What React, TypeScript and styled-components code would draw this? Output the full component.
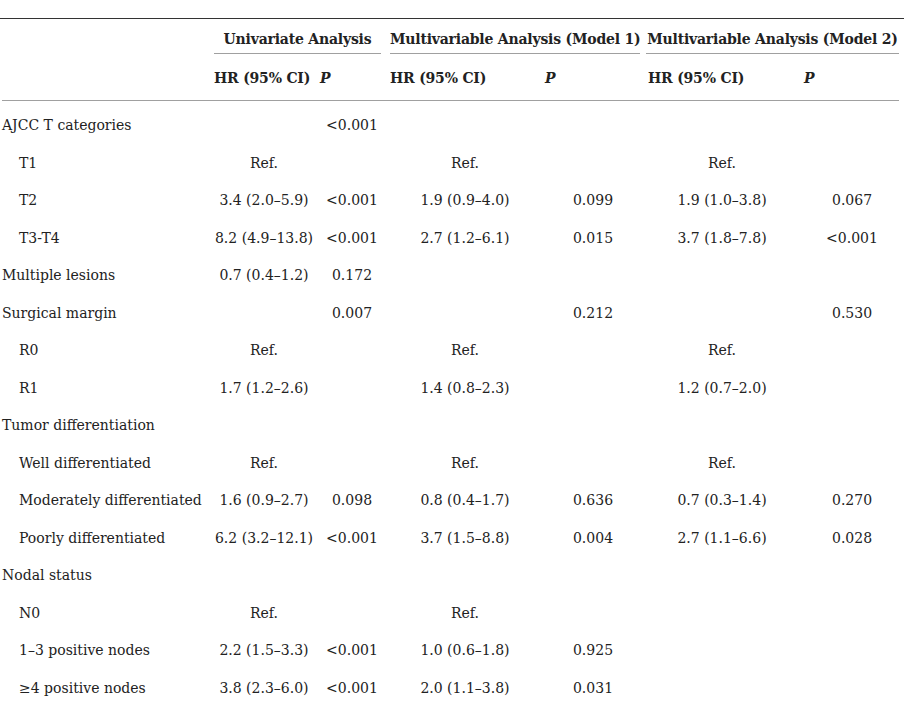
import React from "react";
import styled, { createGlobalStyle } from "styled-components";

const GlobalStyle = createGlobalStyle`
  html, body {
    margin: 0;
    padding: 0;
    background: #ffffff;
  }
  body {
    font-family: "DejaVu Serif", "Liberation Serif", serif;
    color: #222222;
  }
`;

const Table = styled.table`
  margin-top: 18px;
  width: 904px;
  table-layout: fixed;
  border-collapse: collapse;
  border-top: 1px solid #333333;
  font-size: 14px;
`;

const HeadCell = styled.th<{ $pad?: number }>`
  padding: 13.5px 0 12.5px ${(p) => p.$pad ?? 2}px;
  line-height: 20px;
  font-weight: bold;
  letter-spacing: -0.2px;
  text-align: left;
  white-space: nowrap;
`;

const GroupCell = styled.th`
  padding: 9.5px 0 0;
  font-weight: bold;
  letter-spacing: -0.2px;
  white-space: nowrap;
`;

const GroupLabel = styled.div<{ $right?: number }>`
  margin: 0 ${(p) => p.$right ?? 6}px 0 2px;
  padding-bottom: 4.5px;
  line-height: 20px;
  text-align: center;
  border-bottom: 1px solid #a0a0a0;
`;

const RuleCell = styled.td`
  padding: 0 0 6px;
`;

const Rule = styled.div`
  margin: 0 5px 0 2px;
  border-top: 1px solid #a0a0a0;
`;

const Label = styled.td<{ $indent?: boolean }>`
  height: 37.5px;
  padding: 0 0 0 ${(p) => (p.$indent ? 19 : 2)}px;
  line-height: 37.5px;
  white-space: nowrap;
`;

const Value = styled.td`
  padding: 0;
  line-height: 37.5px;
  text-align: center;
  white-space: nowrap;
`;

const PItalic = styled.i`
  font-style: italic;
`;

type Row = {
  label: string;
  indent?: boolean;
  values: string[];
};

const rows: Row[] = [
  { label: "AJCC T categories", values: ["", "<0.001", "", "", "", ""] },
  { label: "T1", indent: true, values: ["Ref.", "", "Ref.", "", "Ref.", ""] },
  { label: "T2", indent: true, values: ["3.4 (2.0–5.9)", "<0.001", "1.9 (0.9–4.0)", "0.099", "1.9 (1.0–3.8)", "0.067"] },
  { label: "T3-T4", indent: true, values: ["8.2 (4.9–13.8)", "<0.001", "2.7 (1.2–6.1)", "0.015", "3.7 (1.8–7.8)", "<0.001"] },
  { label: "Multiple lesions", values: ["0.7 (0.4–1.2)", "0.172", "", "", "", ""] },
  { label: "Surgical margin", values: ["", "0.007", "", "0.212", "", "0.530"] },
  { label: "R0", indent: true, values: ["Ref.", "", "Ref.", "", "Ref.", ""] },
  { label: "R1", indent: true, values: ["1.7 (1.2–2.6)", "", "1.4 (0.8–2.3)", "", "1.2 (0.7–2.0)", ""] },
  { label: "Tumor differentiation", values: ["", "", "", "", "", ""] },
  { label: "Well differentiated", indent: true, values: ["Ref.", "", "Ref.", "", "Ref.", ""] },
  { label: "Moderately differentiated", indent: true, values: ["1.6 (0.9–2.7)", "0.098", "0.8 (0.4–1.7)", "0.636", "0.7 (0.3–1.4)", "0.270"] },
  { label: "Poorly differentiated", indent: true, values: ["6.2 (3.2–12.1)", "<0.001", "3.7 (1.5–8.8)", "0.004", "2.7 (1.1–6.6)", "0.028"] },
  { label: "Nodal status", values: ["", "", "", "", "", ""] },
  { label: "N0", indent: true, values: ["Ref.", "", "Ref.", "", "", ""] },
  { label: "1–3 positive nodes", indent: true, values: ["2.2 (1.5–3.3)", "<0.001", "1.0 (0.6–1.8)", "0.925", "", ""] },
  { label: "≥4 positive nodes", indent: true, values: ["3.8 (2.3–6.0)", "<0.001", "2.0 (1.1–3.8)", "0.031", "", ""] },
];

const colWidths = [212, 104, 72, 154, 102, 156, 104];

export default function App() {
  return (
    <>
      <GlobalStyle />
      <Table>
        <colgroup>
          {colWidths.map((w, i) => (
            <col key={i} style={{ width: w }} />
          ))}
        </colgroup>
        <thead>
          <tr>
            <GroupCell />
            <GroupCell colSpan={2}>
              <GroupLabel $right={7}>Univariate Analysis</GroupLabel>
            </GroupCell>
            <GroupCell colSpan={2}>
              <GroupLabel $right={4}>Multivariable Analysis (Model 1)</GroupLabel>
            </GroupCell>
            <GroupCell colSpan={2}>
              <GroupLabel $right={5}>Multivariable Analysis (Model 2)</GroupLabel>
            </GroupCell>
          </tr>
          <tr>
            <HeadCell />
            <HeadCell>HR (95% CI)</HeadCell>
            <HeadCell $pad={4}>
              <PItalic>P</PItalic>
            </HeadCell>
            <HeadCell>HR (95% CI)</HeadCell>
            <HeadCell $pad={3}>
              <PItalic>P</PItalic>
            </HeadCell>
            <HeadCell $pad={4}>HR (95% CI)</HeadCell>
            <HeadCell $pad={4}>
              <PItalic>P</PItalic>
            </HeadCell>
          </tr>
          <tr>
            <RuleCell colSpan={7}>
              <Rule />
            </RuleCell>
          </tr>
        </thead>
        <tbody>
          {rows.map((row, index) => (
            <tr key={index}>
              <Label $indent={row.indent}>{row.label}</Label>
              {row.values.map((v, i) => (
                <Value key={i}>{v}</Value>
              ))}
            </tr>
          ))}
        </tbody>
      </Table>
    </>
  );
}
